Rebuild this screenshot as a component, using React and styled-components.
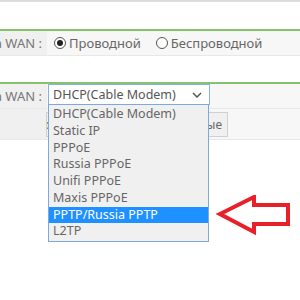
import styled, { createGlobalStyle } from "styled-components";

const Global = createGlobalStyle`
  html, body {
    margin: 0;
    padding: 0;
    background: #fff;
    overflow: hidden;
    font-family: "Noto Sans", "Open Sans", sans-serif;
  }
`;

const options = [
  "DHCP(Cable Modem)",
  "Static IP",
  "PPPoE",
  "Russia PPPoE",
  "Unifi PPPoE",
  "Maxis PPPoE",
  "PPTP/Russia PPTP",
  "L2TP",
];

function App() {
  return (
    <Page>
      <Global />
      <TopBar />
      <Section>
        <Row>
          <Label>Тип доступа WAN :</Label>
          <Value>
            <Radio>
              <Circle checked />
              Проводной
            </Radio>
            <Radio>
              <Circle />
              Беспроводной
            </Radio>
          </Value>
        </Row>
      </Section>

      <Section>
        <Row>
          <Label>Тип доступа WAN :</Label>
          <Value>
            <SelectWrap>
              <Select>
                DHCP(Cable Modem)
                <svg width="10" height="6" viewBox="0 0 10 6">
                  <path d="M1 1 L5 5 L9 1" fill="none" stroke="#555" strokeWidth="1.5" />
                </svg>
              </Select>
              <DropList>
                {options.map(o => (
                  <Item key={o} active={o === "PPTP/Russia PPTP"}>
                    {o}
                  </Item>
                ))}
              </DropList>
            </SelectWrap>
          </Value>
        </Row>
        <Row tall>
          <Label />
          <Value>
            <CloneButton>Восстановить исходные данные</CloneButton>
          </Value>
        </Row>
      </Section>

      <Arrow width="80" height="46" viewBox="0 0 80 46">
        <polygon
          points="4,19 38,2 38,10 72,10 72,29 38,29 38,37"
          fill="none"
          stroke="#e8202a"
          strokeWidth="4"
          strokeLinejoin="miter"
        />
      </Arrow>
    </Page>
  );
}

export default App;

const Page = styled.div`
  position: relative;
  width: 300px;
  height: 300px;
  overflow: hidden;
`;

const TopBar = styled.div`
  height: 2px;
  background: #dcdcdc;
  margin-bottom: 27px;
`;

const Section = styled.div`
  border-top: 2px solid #86c26b;
  margin-bottom: 26px;
`;

const Row = styled.div`
  display: grid;
  grid-template-columns: 47px 1fr;
  height: ${p => (p.tall ? "30px" : "24px")};
  border-bottom: 1px solid #e8e8e8;
  font-size: 13px;
  color: #666;
`;

const Label = styled.div`
  display: flex;
  justify-content: flex-end;
  align-items: center;
  padding-right: 5px;
  white-space: nowrap;
  background: #f0f0f0;
  color: #777;
`;

const Value = styled.div`
  display: flex;
  align-items: center;
  gap: 15px;
  padding-left: 7px;
  background: #f7f7f7;
`;

const Radio = styled.label`
  display: flex;
  align-items: center;
  gap: 3px;
  color: #666;
  white-space: nowrap;
`;

const Circle = styled.span`
  width: 10px;
  height: 10px;
  border-radius: 50%;
  border: 1px solid #555;
  background: #fff;
  display: flex;
  align-items: center;
  justify-content: center;

  &::after {
    content: "";
    width: 6px;
    height: 6px;
    border-radius: 50%;
    background: ${p => (p.checked ? "#222" : "transparent")};
  }
`;

const SelectWrap = styled.div`
  position: relative;
  align-self: flex-start;
  margin-left: -6px;
`;

const Select = styled.div`
  width: 149px;
  height: 19px;
  padding: 0 7px 0 4px;
  border: 1px solid #80b3e8;
  background: #fff;
  display: flex;
  align-items: center;
  justify-content: space-between;
  color: #555;
  font-size: 12.5px;
  white-space: nowrap;
`;

const DropList = styled.div`
  position: absolute;
  top: 20px;
  left: 0;
  width: 159px;
  padding: 1px 0;
  border: 1px solid #7ea9dc;
  background: #f0f0f0;
  font-size: 12.5px;
  z-index: 2;
`;

const Item = styled.div`
  height: 16.75px;
  line-height: 16.75px;
  padding-left: 4px;
  white-space: nowrap;
  color: ${p => (p.active ? "#fff" : "#666")};
  background: ${p => (p.active ? "#1e90ff" : "transparent")};
`;

const CloneButton = styled.div`
  margin-left: -8px;
  width: 175px;
  height: 23px;
  border: 1px solid #d0d0d0;
  background: #f0f0f0;
  display: flex;
  align-items: center;
  justify-content: flex-end;
  padding-right: 5px;
  color: #666;
  font-size: 12px;
  white-space: nowrap;
  overflow: hidden;
`;

const Arrow = styled.svg`
  position: absolute;
  left: 216px;
  top: 195px;
`;
